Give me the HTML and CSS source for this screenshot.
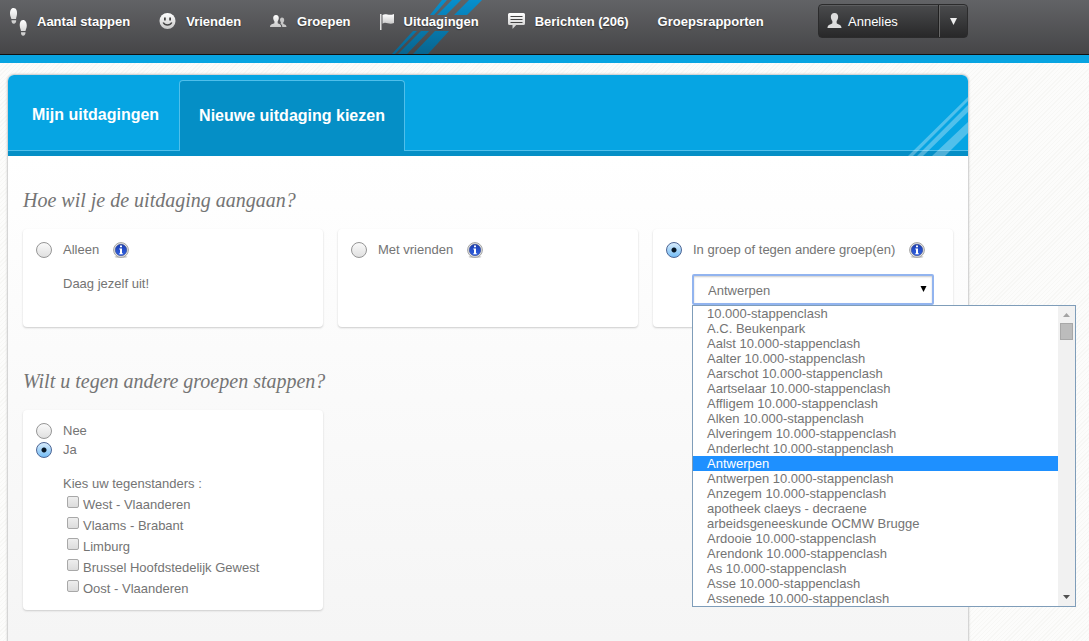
FILE: index.html
```html
<!DOCTYPE html>
<html lang="nl">
<head>
<meta charset="utf-8">
<meta name="viewport" content="width=device-width, initial-scale=1">
<title>Nieuwe uitdaging kiezen</title>
<link rel="stylesheet" href="styles.css">
</head>
<body>
<svg class="defs" aria-hidden="true">
  <defs>
    <linearGradient id="silver" x1="0" y1="0" x2="0" y2="1"><stop offset="0" stop-color="#fff"/><stop offset="1" stop-color="#c9c9c9"/></linearGradient>
    <linearGradient id="stripe" gradientUnits="userSpaceOnUse" x1="0" y1="0" x2="0" y2="54"><stop offset="0" stop-color="#078fcd"/><stop offset="1" stop-color="#08658f"/></linearGradient>
    <linearGradient id="blue" x1="0" y1="0" x2="0" y2="1"><stop offset="0" stop-color="#1a3cae"/><stop offset="1" stop-color="#3263e6"/></linearGradient>
    <symbol id="info" viewBox="0 0 16 16">
      <ellipse cx="8" cy="14.800" rx="6.500" ry="1.200" fill="#ccc"/>
      <circle cx="8" cy="8" r="7.400" fill="#e4e4e4" stroke="#a3a3a3"/>
      <circle cx="8" cy="8" r="5.700" fill="url(#blue)" stroke="#2a3f8c" stroke-width=".6"/>
      <path d="M7 3.500h2v1.800H7zM6.300 6.500H9v4.700h.8v1H6.300v-1H7V7.500h-.7z" fill="#fff"/>
    </symbol>
  </defs>
</svg>

<header class="topbar">
  <nav class="menu" aria-label="Hoofdmenu">
    <a class="menu-link" href="#">
      <svg class="menu-icon icon-steps" viewBox="0 0 18 30" aria-hidden="true"><g fill="url(#silver)"><path d="M4.500 1C7.400 1 8.300 4 8 7c-.2 2-.8 3.500-1 5H2.400C2 10 1 9 1 6.500 1 3.500 2 1 4.500 1zM2.500 13.200h4.700c0 2-.8 3.500-2.400 3.500s-2.300-1.300-2.300-3.500z"/><path d="M14 13c2.600 0 3.800 2.500 3.800 5.500 0 2.500-1 3.500-1.300 5.500H12c-.2-1.500-1-3-1.200-5-.2-3 .7-6 3.200-6zM12 25.200h4.500c0 2.200-.8 3.500-2.400 3.500s-2.100-1.500-2.100-3.500z"/></g></svg>
      <span>Aantal stappen</span>
    </a>
    <a class="menu-link" href="#">
      <svg class="menu-icon" viewBox="0 0 17 18" aria-hidden="true"><circle cx="8.500" cy="8" r="8" fill="url(#silver)"/><path d="M5 4.500h1.800v3H5zM10.200 4.500H12v3h-1.800z" fill="#444"/><path d="M4.200 9.500c1.800 3.300 6.800 3.300 8.600 0" fill="none" stroke="#444" stroke-width="1.500"/></svg>
      <span>Vrienden</span>
    </a>
    <a class="menu-link" href="#">
      <svg class="menu-icon" viewBox="0 0 17 18" aria-hidden="true"><path d="M6 2c2 0 2.900 1.300 2.800 3.200-.1 1.500-.7 2.300-1.100 3v2c1.200.9 3.500.8 3.500 3.800H0c0-3 3-2.900 4.400-3.800v-2C3.900 7.500 3.300 6.700 3.200 5.200 3.100 3.300 4 2 6 2z" fill="url(#silver)"/><path d="M12 4.500c1.500 0 2.200 1 2.200 2.400 0 1.100-.5 1.800-.9 2.300v1.500c1 .8 3.200.7 3.200 3.300h-4.200c-.1-1.800-.8-2.800-1.800-3.300l.4-.6v-.9c-.5-.6-.9-1.300-.9-2.300 0-1.400.7-2.400 2-2.400z" fill="#c6c6c6"/></svg>
      <span>Groepen</span>
    </a>
    <a class="menu-link is-active" href="#" aria-current="page">
      <svg class="menu-stripes" viewBox="0 0 92 54" aria-hidden="true"><g fill="url(#stripe)"><path d="M50 0h5L42 15h-4zM60 0h9L54 15h-9zM77 0h13L75 15H62zM21 31h4L3 54H0zM29 31h8L15 54H6zM43 31h14L36 54H21z"/></g></svg>
      <svg class="menu-icon icon-flag" viewBox="0 0 14 18" aria-hidden="true"><path d="M0 1h1.500v16H0z" fill="#ddd"/><path d="M2.500 2c3.500-2.500 6 1.500 11.500-1v9c-5 2.500-8-2-11.500.7z" fill="url(#silver)"/></svg>
      <span>Uitdagingen</span>
    </a>
    <a class="menu-link" href="#">
      <svg class="menu-icon" viewBox="0 0 17 18" aria-hidden="true"><path d="M1.500 0h14Q17 0 17 1.500v9q0 1.500-1.500 1.500H8.200l-3.700 4v-4h-3Q0 12 0 10.500v-9Q0 0 1.500 0z" fill="url(#silver)"/><path d="M2.500 3.500h12M2.500 6.500h12M2.500 9.500h12" stroke="#444"/></svg>
      <span>Berichten (206)</span>
    </a>
    <a class="menu-link" href="#"><span>Groepsrapporten</span></a>
  </nav>
  <div class="account">
    <button class="account-name" type="button">
      <svg class="account-icon" viewBox="0 0 16 17" aria-hidden="true"><path d="M8 0c2.800 0 4 1.800 3.900 4.300-.1 2-.8 3.200-1.600 4.200v2.300c1.500 1.500 5.200 1.200 5.200 5.200H.5c0-4 3.700-3.700 5.200-5.200V8.500C4.900 7.500 4.200 6.300 4.100 4.300 4 1.800 5.200 0 8 0z" fill="#ddd"/></svg>
      Annelies
    </button>
    <button class="account-toggle" type="button" aria-label="Accountmenu">
      <svg class="caret" viewBox="0 0 7 7" aria-hidden="true"><path d="M0 0h7L3.500 7z" fill="#eee"/></svg>
    </button>
  </div>
</header>

<main class="panel">
  <nav class="tabs" aria-label="Uitdagingen">
    <a class="tab" href="#">Mijn uitdagingen</a>
    <a class="tab is-current" href="#" aria-current="page">Nieuwe uitdaging kiezen</a>
    <span class="tabs-rest"></span>
    <svg class="tabs-stripes" viewBox="0 0 60 59" aria-hidden="true"><path d="M60 0v4L5 59H0zM60 8v7L15 59H9zM60 25v11L37 59H24z" fill="#fff" fill-opacity=".3"/></svg>
  </nav>

  <form class="content">
    <section class="question">
      <h2 class="title">Hoe wil je de uitdaging aangaan?</h2>
      <div class="cards">
        <div class="card">
          <div class="choice">
            <input class="radio" type="radio" name="mode" id="mode-alone">
            <label for="mode-alone">Alleen</label>
            <svg class="info" role="img" aria-label="Info"><use href="#info"/></svg>
          </div>
          <p class="note">Daag jezelf uit!</p>
        </div>
        <div class="card">
          <div class="choice">
            <input class="radio" type="radio" name="mode" id="mode-friends">
            <label for="mode-friends">Met vrienden</label>
            <svg class="info" role="img" aria-label="Info"><use href="#info"/></svg>
          </div>
        </div>
        <div class="card card-group">
          <div class="choice">
            <input class="radio" type="radio" name="mode" id="mode-group" checked>
            <label for="mode-group">In groep of tegen andere groep(en)</label>
            <svg class="info" role="img" aria-label="Info"><use href="#info"/></svg>
          </div>
          <div class="picker">
            <select class="select" aria-label="Groep"><option>Antwerpen</option></select>
            <svg class="caret select-caret" viewBox="0 0 7 7" aria-hidden="true"><path d="M0 0h7L3.500 7z"/></svg>
            <div class="popup">
              <ul class="options" role="listbox" aria-label="Groepen">
                <li class="option" role="option">10.000-stappenclash</li>
                <li class="option" role="option">A.C. Beukenpark</li>
                <li class="option" role="option">Aalst 10.000-stappenclash</li>
                <li class="option" role="option">Aalter 10.000-stappenclash</li>
                <li class="option" role="option">Aarschot 10.000-stappenclash</li>
                <li class="option" role="option">Aartselaar 10.000-stappenclash</li>
                <li class="option" role="option">Affligem 10.000-stappenclash</li>
                <li class="option" role="option">Alken 10.000-stappenclash</li>
                <li class="option" role="option">Alveringem 10.000-stappenclash</li>
                <li class="option" role="option">Anderlecht 10.000-stappenclash</li>
                <li class="option is-selected" role="option" aria-selected="true">Antwerpen</li>
                <li class="option" role="option">Antwerpen 10.000-stappenclash</li>
                <li class="option" role="option">Anzegem 10.000-stappenclash</li>
                <li class="option" role="option">apotheek claeys - decraene</li>
                <li class="option" role="option">arbeidsgeneeskunde OCMW Brugge</li>
                <li class="option" role="option">Ardooie 10.000-stappenclash</li>
                <li class="option" role="option">Arendonk 10.000-stappenclash</li>
                <li class="option" role="option">As 10.000-stappenclash</li>
                <li class="option" role="option">Asse 10.000-stappenclash</li>
                <li class="option" role="option">Assenede 10.000-stappenclash</li>
              </ul>
              <div class="scroll" aria-hidden="true">
                <svg class="scroll-arrow" viewBox="0 0 17 17"><path d="M5 11h7L8.500 7z" fill="#a3a3a3"/></svg>
                <span class="scroll-thumb"></span>
                <svg class="scroll-arrow scroll-end" viewBox="0 0 17 17"><path d="M5 6h7l-3.500 4z" fill="#505050"/></svg>
              </div>
            </div>
          </div>
        </div>
      </div>
    </section>

    <section class="question">
      <h2 class="title">Wilt u tegen andere groepen stappen?</h2>
      <div class="cards">
        <div class="card card-compact">
          <div class="choice">
            <input class="radio" type="radio" name="versus" id="versus-no">
            <label for="versus-no">Nee</label>
          </div>
          <div class="choice">
            <input class="radio" type="radio" name="versus" id="versus-yes" checked>
            <label for="versus-yes">Ja</label>
          </div>
          <fieldset class="opponents">
            <legend class="legend">Kies uw tegenstanders :</legend>
            <label class="check"><input class="box" type="checkbox">West - Vlaanderen</label>
            <label class="check"><input class="box" type="checkbox">Vlaams - Brabant</label>
            <label class="check"><input class="box" type="checkbox">Limburg</label>
            <label class="check"><input class="box" type="checkbox">Brussel Hoofdstedelijk Gewest</label>
            <label class="check"><input class="box" type="checkbox">Oost - Vlaanderen</label>
          </fieldset>
        </div>
      </div>
    </section>
  </form>
</main>
</body>
</html>
```
FILE: styles.css
```css
* { box-sizing: border-box; }

body {
  margin: 0;
  min-height: 100vh;
  display: flex;
  flex-direction: column;
  font: 13px/19px "Liberation Sans", Arial, sans-serif;
  color: #747474;
  background: repeating-linear-gradient(135deg, #fcfcfb 0 2px, #f7f7f5 2px 3px);
}

a { color: inherit; text-decoration: none; }
svg { display: block; flex: none; }
.defs { position: absolute; width: 0; height: 0; }

/* Top bar */
.topbar {
  height: 63px;
  display: flex;
  align-items: flex-start;
  border-bottom: 8px solid #08a4e1;
  background: linear-gradient(#626366, #454547);
  box-shadow: inset 0 -1px #111;
}
.menu {
  flex: 0 1 810px;
  height: 43px;
  display: flex;
  align-items: center;
  gap: 29px;
  padding-left: 9px;
  white-space: nowrap;
}
.menu-link {
  position: relative;
  display: flex;
  align-items: center;
  gap: 10px;
  font-weight: bold;
  color: #fff;
  text-shadow: 0 1px 1px #333;
}
.menu-icon { width: 17px; height: 18px; }
.icon-steps { width: 18px; height: 30px; }
.icon-flag { width: 14px; }
.menu-link > span { position: relative; }
.menu-stripes { position: absolute; left: 12px; top: -12px; width: 92px; height: 54px; }

.account {
  display: flex;
  height: 34px;
  margin: 4px 0 0 8px;
  border: 1px solid #2b2b2c;
  border-radius: 4px;
  background: linear-gradient(#4a4b4d, #282829);
  box-shadow: inset 0 1px #5c5d5f;
}
.account-name,
.account-toggle {
  display: flex;
  align-items: center;
  border: 0;
  background: none;
  font: inherit;
  color: #fff;
}
.account-name { width: 120px; gap: 6px; padding: 0 8px; }
.account-icon { width: 15px; height: 16px; }
.account-toggle {
  width: 28px;
  justify-content: center;
  padding: 0;
  border-left: 1px solid #686868;
  box-shadow: -1px 0 #202020;
}
.caret { width: 7px; height: 7px; }

/* Panel */
.panel {
  flex: 1;
  width: calc(100% - 16px);
  max-width: 960px;
  margin: 12px 8px 0;
  border-radius: 6px 6px 0 0;
  background: linear-gradient(#fff 80px, #f5f5f5);
  box-shadow: 0 0 2px 1px #c8c8c8;
}
.tabs {
  position: relative;
  display: flex;
  align-items: flex-end;
  height: 81px;
  border-radius: 6px 6px 0 0;
  border-bottom: 5px solid #058fc6;
  background: #06a5e3;
  color: #fff;
  font-size: 16px;
  font-weight: bold;
  white-space: nowrap;
}
.tab {
  height: 71px;
  padding: 0 20px 0 24px;
  border-bottom: 1px solid #4fbfeb;
  line-height: 70px;
}
.tab.is-current {
  padding: 0 19px;
  border: 1px solid #4fbfeb;
  border-bottom: 0;
  border-radius: 4px 4px 0 0;
  background: #058fc6;
}
.tabs-rest { flex: 1; border-bottom: 1px solid #4fbfeb; }
.tabs-stripes { position: absolute; right: 0; bottom: -5px; width: 60px; height: 59px; }

.content { padding: 32px 15px 0; }
.question + .question { margin-top: 42px; }
.title {
  margin: 0 0 17px;
  font: italic 20px/24px Georgia, "Liberation Serif", serif;
}
.cards {
  display: grid;
  grid-template-columns: repeat(3, minmax(0, 1fr));
  gap: 15px;
}
.card {
  padding: 11px 13px 22px;
  border-radius: 4px;
  background: #fff;
  box-shadow: 0 1px 2px #ccc;
}
.card-compact { padding-bottom: 11px; }

.choice { display: flex; align-items: center; gap: 11px; white-space: nowrap; }
.radio {
  appearance: none;
  flex: none;
  width: 16px;
  height: 16px;
  margin: 0;
  border: 1px solid #969696;
  border-radius: 50%;
  background: linear-gradient(#fafafa, #e0e0e0);
}
.radio:checked {
  border-color: #4c6595;
  background: radial-gradient(circle, #061626 2px, transparent 3px), linear-gradient(#d8ecfc, #75bdf5);
}
.info { width: 16px; height: 16px; margin-left: 3px; }
.note { margin: 15px 0 0 27px; }

.picker { position: relative; width: 242px; margin: 15px 0 0 26px; }
.select {
  appearance: none;
  display: block;
  width: 100%;
  height: 31px;
  padding: 1px 14px 0;
  border: 2px solid #92b4ef;
  border-radius: 2px;
  outline: 0;
  background: #fff;
  box-shadow: inset 0 1px 2px #ccc;
  font: inherit;
  color: inherit;
}
.select-caret { position: absolute; right: 7px; top: 12px; width: 7px; height: 6px; pointer-events: none; }

.popup {
  position: absolute;
  left: 0;
  top: 31px;
  z-index: 2;
  display: flex;
  width: 384px;
  border: 1px solid #7f9db9;
  background: #fff;
}
.options { flex: 1; margin: 0; padding: 0; list-style: none; line-height: 15px; }
.option { padding-left: 14px; }
.option.is-selected { background: #1e90ff; color: #fff; }
.scroll { width: 17px; display: flex; flex-direction: column; background: #f1f1f1; }
.scroll-arrow { width: 17px; height: 17px; }
.scroll-thumb { height: 17px; margin: 0 2px; border: 1px solid #a8a8a8; background: #bcbcbc; }
.scroll-end { margin-top: auto; }

.opponents { min-width: 0; margin: 15px 0 0 27px; padding: 0; border: 0; }
.legend { padding: 0 0 1px; }
.check { display: flex; align-items: center; gap: 4px; padding-left: 4px; line-height: 21px; }
.box {
  appearance: none;
  width: 12px;
  height: 12px;
  margin: 0 0 5px;
  border: 1px solid #a8a8a8;
  border-radius: 2px;
  background: linear-gradient(#eee, #dcdcdc);
}
```
